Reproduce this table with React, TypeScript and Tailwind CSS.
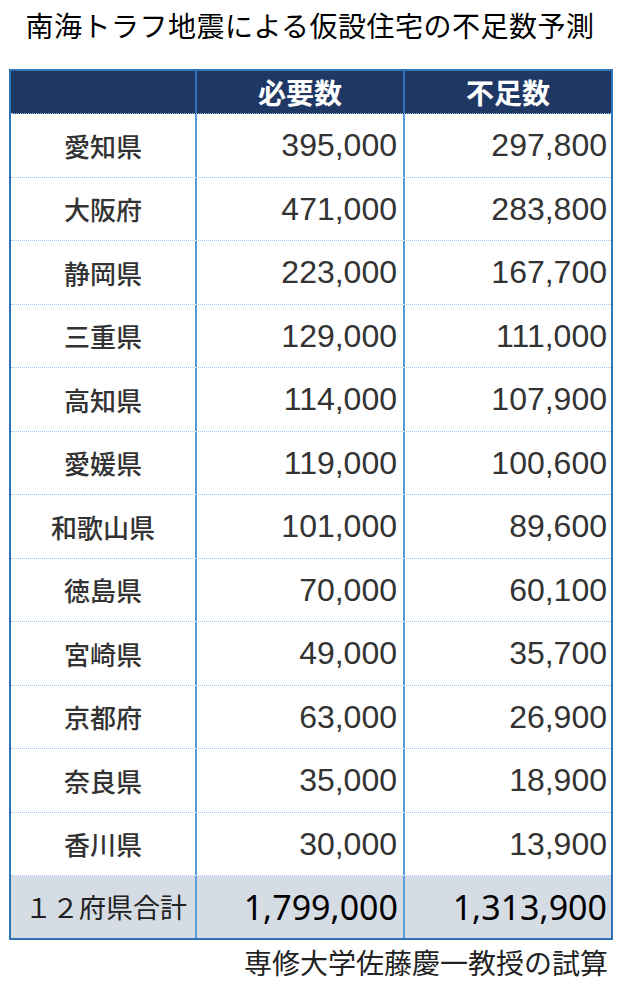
const ROWS: [string, string, string][] = [
  ["愛知県", "395,000", "297,800"],
  ["大阪府", "471,000", "283,800"],
  ["静岡県", "223,000", "167,700"],
  ["三重県", "129,000", "111,000"],
  ["高知県", "114,000", "107,900"],
  ["愛媛県", "119,000", "100,600"],
  ["和歌山県", "101,000", "89,600"],
  ["徳島県", "70,000", "60,100"],
  ["宮崎県", "49,000", "35,700"],
  ["京都府", "63,000", "26,900"],
  ["奈良県", "35,000", "18,900"],
  ["香川県", "30,000", "13,900"],
];

const JP = "font-['Noto_Sans_CJK_JP','Noto_Sans',sans-serif]";
const NUM = "font-['Liberation_Sans',Arial,sans-serif]";

export default function App() {
  return (
    <div className={`w-[620px] h-[985px] bg-white ${JP}`}>
      {/* Title */}
      <h1 className="pt-[6px] h-[69px] text-center text-[28px] leading-[38px] text-black tracking-[0.5px]">
        南海トラフ地震による仮設住宅の不足数予測
      </h1>

      {/* Table */}
      <div className="ml-[9px] w-[604px] border-2 border-[#2e75b6]">
        {/* Header */}
        <div className="grid grid-cols-[186px_208px_206px] h-[43px] bg-[#203864] border-b border-dotted border-[#9dc3e6]">
          <div className="border-r-2 border-[#2e75b6]" />
          <div className="border-r-2 border-[#2e75b6] flex items-center justify-center text-white font-bold text-[28px]">
            必要数
          </div>
          <div className="flex items-center justify-center text-white font-bold text-[28px]">
            不足数
          </div>
        </div>

        {ROWS.map(([name, need, lack]) => (
          <div
            key={name}
            className="grid grid-cols-[186px_208px_206px] h-[63.5px] border-b border-dotted border-[#9dc3e6]"
          >
            <div className="border-r-2 border-[#5b9bd5] flex items-center justify-center text-[26px] font-medium text-[#333333]">
              {name}
            </div>
            <div className={`border-r-2 border-[#5b9bd5] flex items-center justify-end pr-[6px] text-[32px] text-[#333333] ${NUM}`}>
              {need}
            </div>
            <div className={`flex items-center justify-end pr-[4px] text-[32px] text-[#333333] ${NUM}`}>
              {lack}
            </div>
          </div>
        ))}

        {/* Total */}
        <div className="grid grid-cols-[186px_208px_206px] h-[62px] bg-[#d6dce4]">
          <div className="border-r-2 border-[#5b9bd5] flex items-center pl-[14px] text-[27px] text-[#222222]">
            １２府県合計
          </div>
          <div className="border-r-2 border-[#5b9bd5] flex items-center justify-end pr-[5px] text-[34px] text-black font-['Noto_Sans',sans-serif]">
            1,799,000
          </div>
          <div className="flex items-center justify-end pr-[4px] text-[34px] text-black font-['Noto_Sans',sans-serif]">
            1,313,900
          </div>
        </div>
      </div>

      {/* Footer */}
      <p className="pr-[12px] pt-[2px] text-right text-[28px] leading-[40px] text-[#222222]">
        専修大学佐藤慶一教授の試算
      </p>
    </div>
  );
}
